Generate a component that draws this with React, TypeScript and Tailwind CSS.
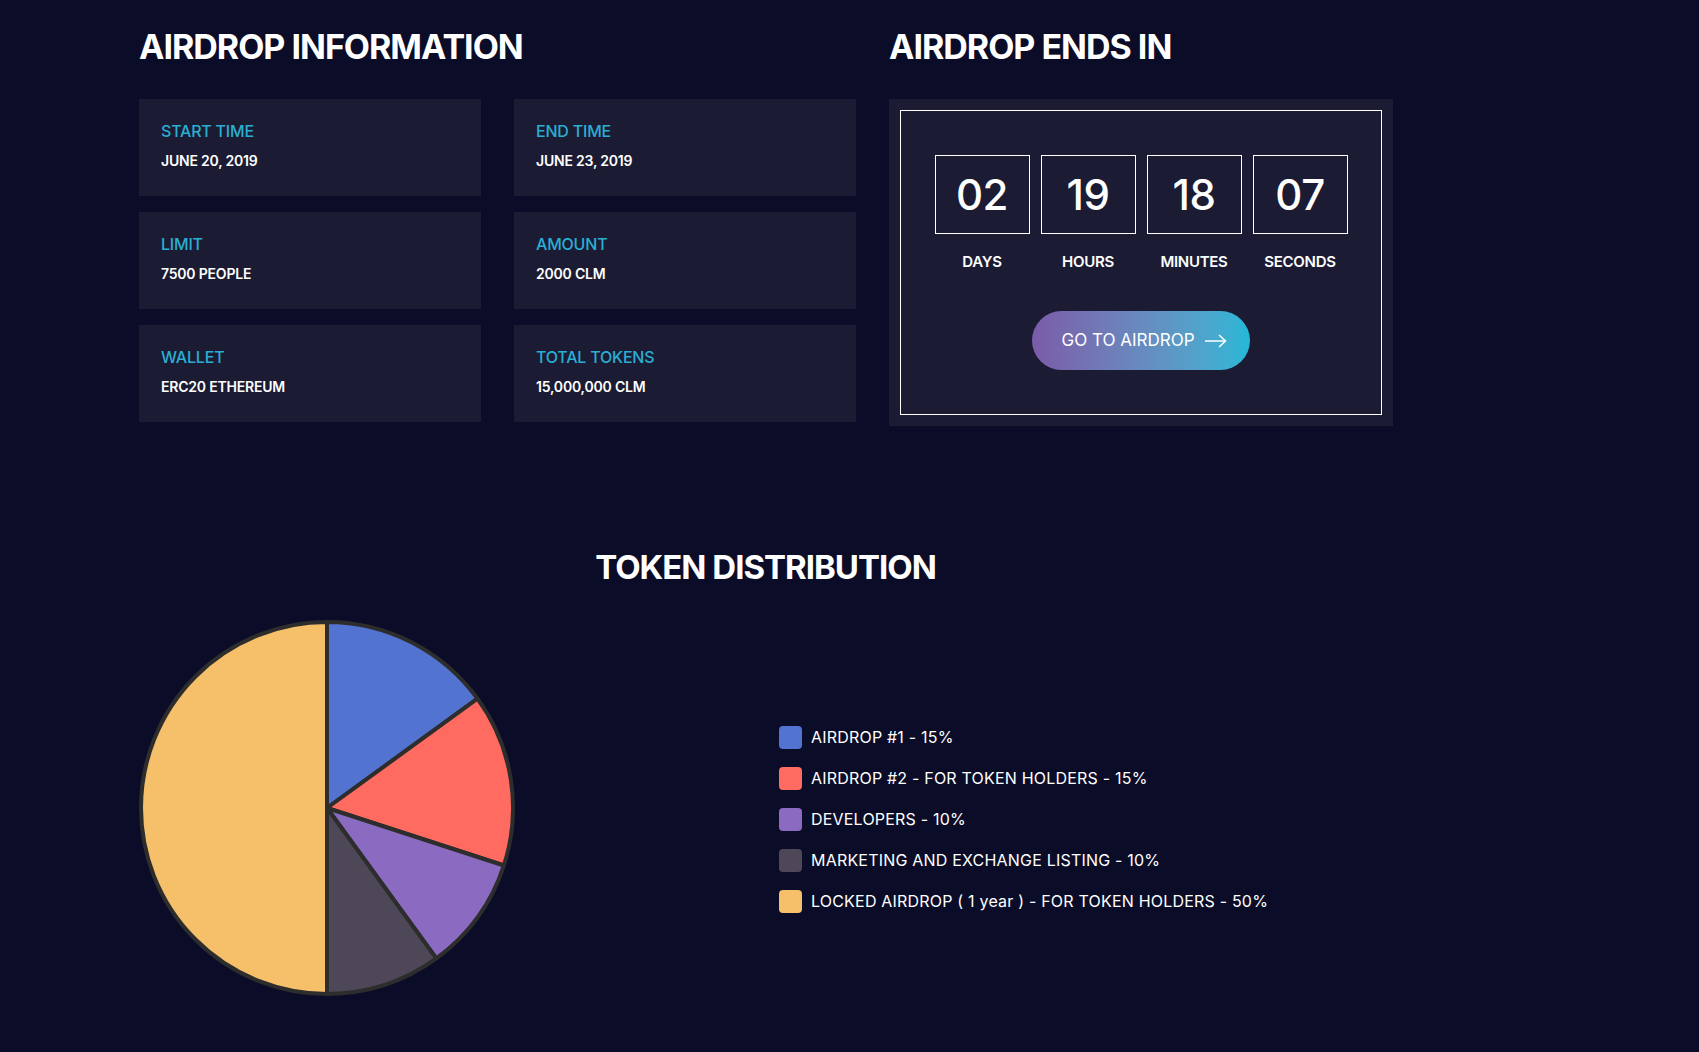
import type { ReactNode } from "react";

const INFO = [
  { label: "START TIME", value: "JUNE 20, 2019" },
  { label: "END TIME", value: "JUNE 23, 2019" },
  { label: "LIMIT", value: "7500 PEOPLE" },
  { label: "AMOUNT", value: "2000 CLM" },
  { label: "WALLET", value: "ERC20 ETHEREUM" },
  { label: "TOTAL TOKENS", value: "15,000,000 CLM" },
];

const COUNTDOWN = [
  { value: "02", label: "DAYS" },
  { value: "19", label: "HOURS" },
  { value: "18", label: "MINUTES" },
  { value: "07", label: "SECONDS" },
];

const SLICES = [
  { label: "AIRDROP #1 - 15%", share: 0.15, color: "#5373d1" },
  { label: "AIRDROP #2 - FOR TOKEN HOLDERS - 15%", share: 0.15, color: "#ff6b61" },
  { label: "DEVELOPERS - 10%", share: 0.1, color: "#8b6bc1" },
  { label: "MARKETING AND EXCHANGE LISTING - 10%", share: 0.1, color: "#4e4758" },
  { label: "LOCKED AIRDROP ( 1 year ) - FOR TOKEN HOLDERS - 50%", share: 0.5, color: "#f6bf69" },
];

function SectionTitle({ children }: { children: ReactNode }) {
  return (
    <h2 className="text-[34px] font-bold leading-[42px] tracking-[-1px] text-white">{children}</h2>
  );
}

function InfoCard({ label, value }: { label: string; value: string }) {
  return (
    <div className="h-[97px] bg-[#1b1c33] px-[22px] pt-[20px]">
      <p className="text-[16px] font-medium leading-[24px] tracking-[-0.2px] text-[#2aaed3]">{label}</p>
      <p className="mt-[8px] text-[14px] font-semibold leading-[20px] tracking-[-0.2px] text-white">{value}</p>
    </div>
  );
}

function ArrowRight() {
  return (
    <svg width="22" height="14" viewBox="0 0 22 14" fill="none" stroke="white" strokeWidth="1.5">
      <path d="M0 7 H20" />
      <path d="M14 1 L20.5 7 L14 13" />
    </svg>
  );
}

function PieChart() {
  const r = 186;
  const point = (f: number) => {
    const a = f * Math.PI * 2;
    return `${(r * Math.sin(a)).toFixed(2)} ${(-r * Math.cos(a)).toFixed(2)}`;
  };
  let start = 0;
  const paths = SLICES.map((s) => {
    const end = start + s.share;
    const large = s.share > 0.5 ? 1 : 0;
    const d = `M0 0 L${point(start)} A${r} ${r} 0 ${large} 1 ${point(end)} Z`;
    start = end;
    return <path key={s.label} d={d} fill={s.color} stroke="#2d2d2d" strokeWidth="4" strokeLinejoin="round" />;
  });

  return (
    <svg width="380" height="380" viewBox="-190 -190 380 380" className="-ml-[2px] shrink-0">
      {paths}
    </svg>
  );
}

export default function App() {
  return (
    <div className="min-h-screen bg-[#0b0c27] pl-[139px] pt-[26px] font-['Inter',sans-serif] text-white">
      <div className="flex gap-[33px]">
        <div className="w-[717px]">
          <SectionTitle>AIRDROP INFORMATION</SectionTitle>
          <div className="mt-[31px] grid grid-cols-2 gap-x-[33px] gap-y-[16px]">
            {INFO.map((item) => (
              <InfoCard key={item.label} label={item.label} value={item.value} />
            ))}
          </div>
        </div>

        <div className="w-[504px]">
          <SectionTitle>AIRDROP ENDS IN</SectionTitle>
          <div className="mt-[31px] bg-[#1b1c33] p-[11px]">
            <div className="flex h-[305px] flex-col items-center border border-white pt-[44px]">
              <div className="flex gap-[11px]">
                {COUNTDOWN.map((c) => (
                  <div key={c.label} className="flex w-[95px] flex-col items-center">
                    <div className="flex h-[79px] w-[95px] items-center justify-center border border-white">
                      <span className="text-[42px] font-medium leading-none tracking-[-0.5px]">{c.value}</span>
                    </div>
                    <span className="mt-[18px] text-[15px] font-semibold leading-[20px] tracking-[-0.3px]">
                      {c.label}
                    </span>
                  </div>
                ))}
              </div>
              <button
                type="button"
                className="mt-[39px] flex h-[59px] w-[218px] items-center justify-center gap-[10px] rounded-full bg-gradient-to-r from-[#7a5ba8] to-[#22b8d6] pl-[6px] text-[17px] leading-none text-white"
              >
                <span>GO TO AIRDROP</span>
                <ArrowRight />
              </button>
            </div>
          </div>
        </div>
      </div>

      <div className="w-[1253px] pt-[120px]">
        <h2 className="text-center text-[33px] font-bold leading-[42px] tracking-[-1px] text-white">
          TOKEN DISTRIBUTION
        </h2>
        <div className="mt-[30px] flex items-center">
          <PieChart />
          <ul className="ml-[262px] flex flex-col gap-[18px] pt-[22px]">
            {SLICES.map((s) => (
              <li key={s.label} className="flex items-center gap-[9px]">
                <span className="h-[23px] w-[23px] rounded-[4px]" style={{ backgroundColor: s.color }} />
                <span className="text-[16px] leading-[23px] tracking-[0.2px] text-white">{s.label}</span>
              </li>
            ))}
          </ul>
        </div>
      </div>
    </div>
  );
}
